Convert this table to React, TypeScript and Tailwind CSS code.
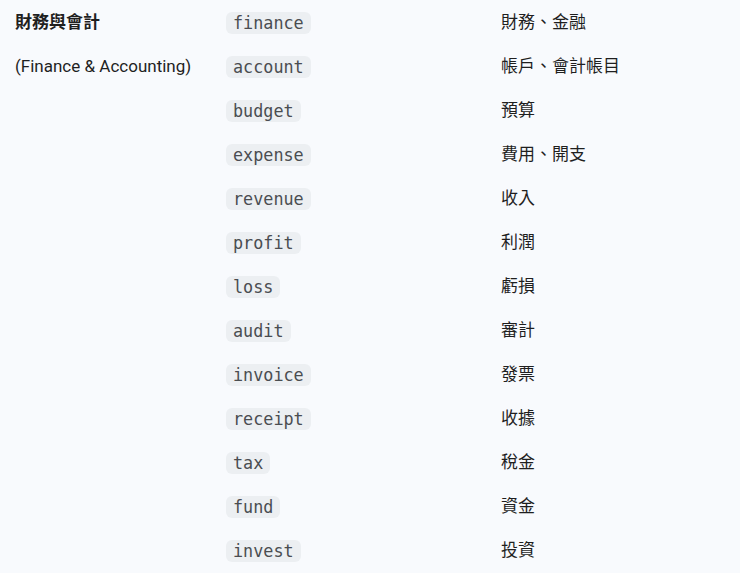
const rows: { term: string; meaning: string }[] = [
  { term: 'finance', meaning: '財務、金融' },
  { term: 'account', meaning: '帳戶、會計帳目' },
  { term: 'budget', meaning: '預算' },
  { term: 'expense', meaning: '費用、開支' },
  { term: 'revenue', meaning: '收入' },
  { term: 'profit', meaning: '利潤' },
  { term: 'loss', meaning: '虧損' },
  { term: 'audit', meaning: '審計' },
  { term: 'invoice', meaning: '發票' },
  { term: 'receipt', meaning: '收據' },
  { term: 'tax', meaning: '稅金' },
  { term: 'fund', meaning: '資金' },
  { term: 'invest', meaning: '投資' },
];

const sans = "font-['Roboto','Noto_Sans_CJK_TC',sans-serif]";

export default function App() {
  return (
    <div className={`min-h-screen bg-white ${sans} text-[17px] text-[#1f1f1f]`}>
      <div className="bg-[#f8fafd] pt-[1px]">
        <div className="grid grid-cols-[211px_275px_1fr]">
          {rows.map((row, i) => (
            <div key={row.term} className="contents">
              <div className="h-[44px] pl-[15px] flex items-center">
                {i === 0 && <span className="font-bold">財務與會計</span>}
                {i === 1 && <span>(Finance &amp; Accounting)</span>}
              </div>
              <div className="h-[44px] pl-[15px] flex items-center">
                <code className="font-['DejaVu_Sans_Mono',monospace] text-[16.8px] leading-[22px] text-[#4a4d51] bg-[#eceff2] rounded-[6px] px-[7px]">
                  {row.term}
                </code>
              </div>
              <div className="h-[44px] pl-[15px] flex items-center">{row.meaning}</div>
            </div>
          ))}
        </div>
      </div>
    </div>
  );
}
